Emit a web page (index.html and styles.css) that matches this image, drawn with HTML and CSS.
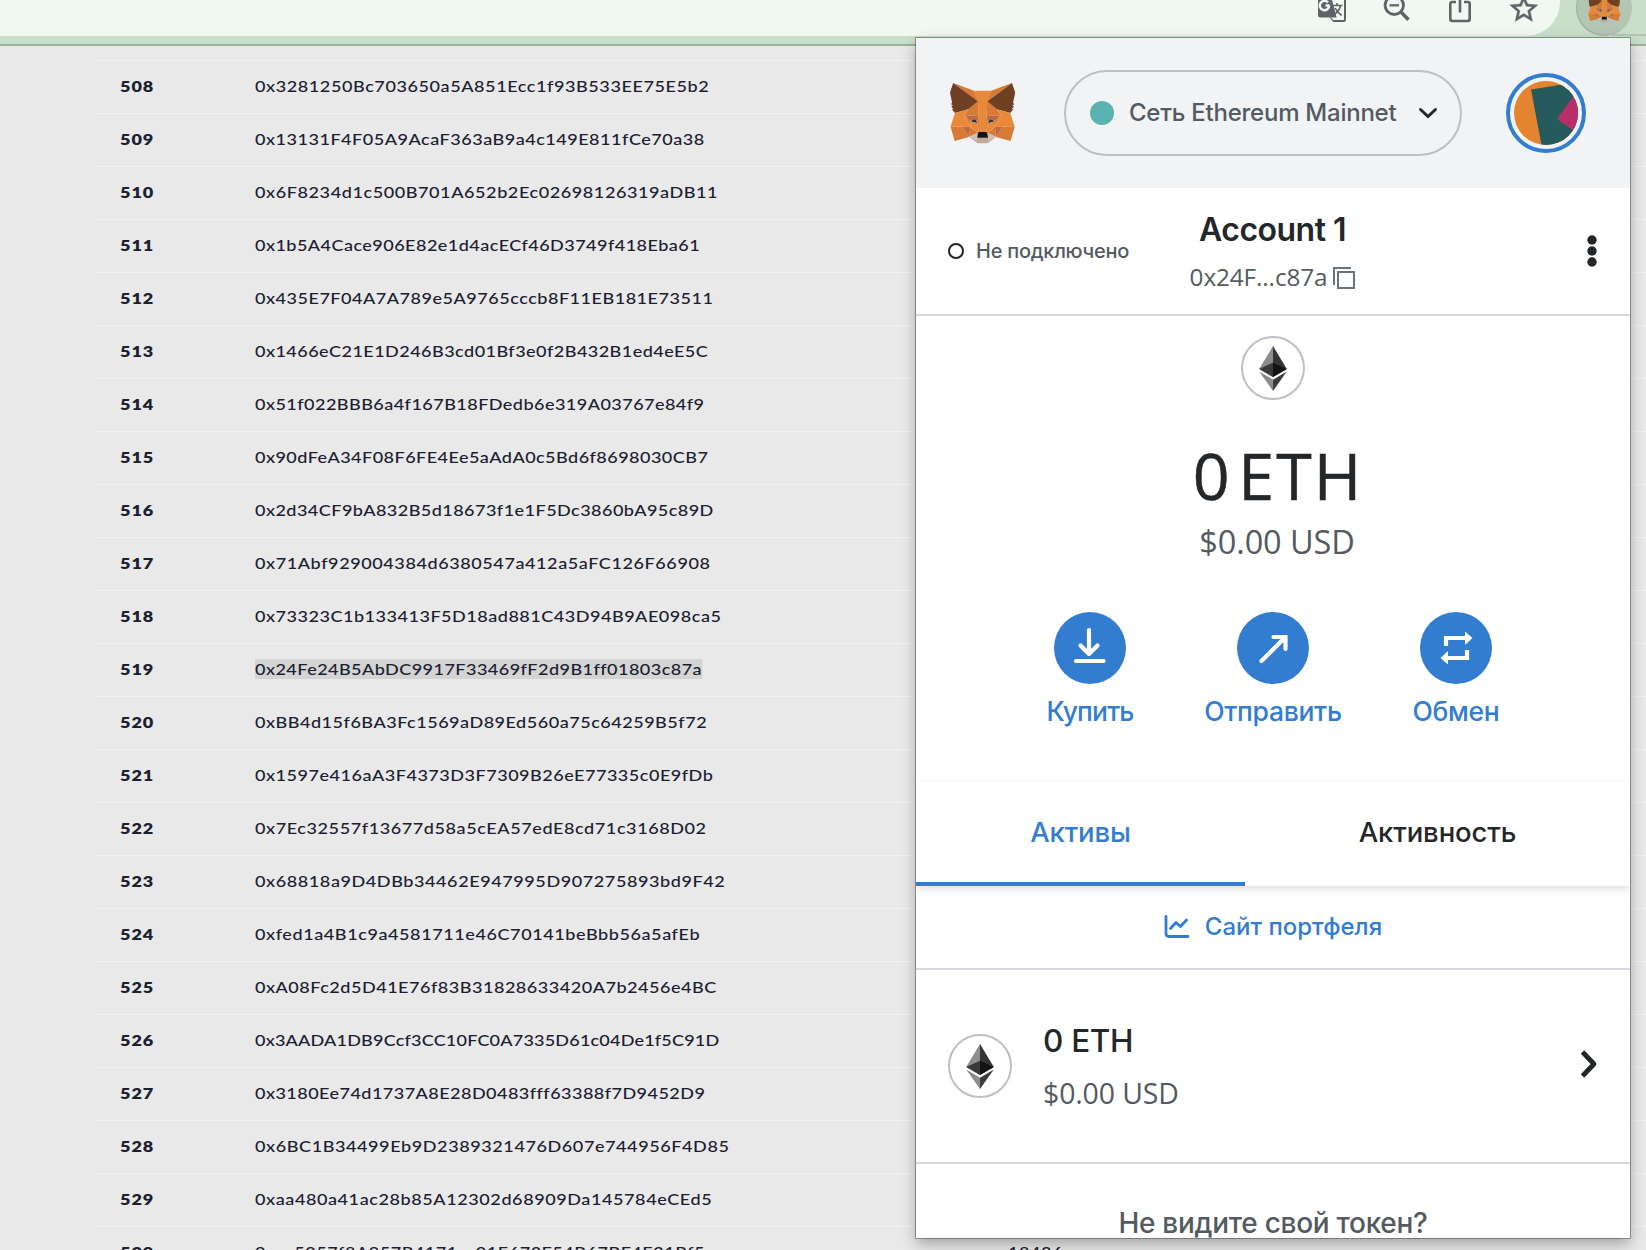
FILE: index.html
```html
<!DOCTYPE html>
<html lang="ru">
<head>
<meta charset="utf-8">
<title>MetaMask</title>
<link rel="stylesheet" href="styles.css">
</head>
<body>
<svg class="defs" aria-hidden="true">
  <symbol id="fox" viewBox="0 0 35 33">
    <path fill="#d67a36" d="m32.9582 1-13.1341 9.7183 2.4424-5.72731z"/>
    <g fill="#d67a36">
      <path d="m2.66296 1 13.01714 9.809-2.3254-5.81802z"/>
      <path d="m28.2295 23.5335-3.4947 5.3386 7.4829 2.0603 2.1436-7.2823z"/>
      <path d="m1.27281 23.6501 2.13055 7.2823 7.46994-2.0603-3.48166-5.3386z"/>
      <path d="m10.4706 14.5149-2.0786 3.1358 7.405.3369-.2469-7.969z"/>
      <path d="m25.1505 14.5149-5.1575-4.58704-.1688 8.05974 7.4049-.3369z"/>
      <path d="m10.8733 28.8721 4.4819-2.1639-3.8583-3.0062z"/>
      <path d="m20.2659 26.7082 4.4689 2.1639-.6105-5.1701z"/>
    </g>
    <g fill="#d3bfb2">
      <path d="m24.7348 28.8721-4.469-2.1639.3638 2.9025-.039 1.231z"/>
      <path d="m10.8732 28.8721 4.1572 1.9696-.026-1.231.3508-2.9025z"/>
    </g>
    <g fill="#233447">
      <path d="m15.1084 21.7842-3.7155-1.0884 2.6243-1.2051z"/>
      <path d="m20.5126 21.7842 1.0913-2.2935 2.6372 1.2051z"/>
    </g>
    <g fill="#c0693a">
      <path d="m10.8733 28.8721.6495-5.3386-4.1312.1167z"/>
      <path d="m24.0982 23.5335.6366 5.3386 3.4946-5.2219z"/>
      <path d="m27.2291 17.6507-7.405.3369.6885 3.7966 1.0913-2.2935 2.6372 1.2051z"/>
      <path d="m11.3929 20.6958 2.6242-1.2051 1.0913 2.2935.6885-3.7966-7.40495-.3369z"/>
    </g>
    <g fill="#d97d36">
      <path d="m8.392 17.6507 3.1049 6.0513-.1039-3.0062z"/>
      <path d="m24.2412 20.6958-.1169 3.0062 3.1049-6.0513z"/>
      <path d="m15.797 17.9876-.6886 3.7967.8704 4.4833.1949-5.9087z"/>
      <path d="m19.8242 17.9876-.3638 2.3584.1819 5.9216.8704-4.4833z"/>
    </g>
    <g fill="#e8893a">
      <path d="m20.5127 21.7842-.8704 4.4834.6236.4406 3.8584-3.0062.1169-3.0062z"/>
      <path d="m11.3929 20.6958.104 3.0062 3.8583 3.0062.6236-.4406-.8704-4.4834z"/>
    </g>
    <path fill="#bfab9d" d="m20.5906 30.8417.039-1.231-.3378-.2851h-4.9626l-.3248.2851.026 1.231-4.1572-1.9696 1.4551 1.1921 2.9489 2.0344h5.0536l2.962-2.0344 1.442-1.1921z"/>
    <path fill="#161616" d="m20.2659 26.7082-.6236-.4406h-3.6635l-.6236.4406-.3508 2.9025.3248-.2851h4.9626l.3378.2851z"/>
    <g fill="#6f4023">
      <path d="m33.5168 11.3532 1.1043-5.36447-1.6629-4.98873-12.6923 9.3944 4.8846 4.1205 6.8983 2.0085 1.52-1.7752-.6626-.4795 1.0523-.9588-.8054-.622 1.0523-.8034z"/>
      <path d="m1 5.98873 1.11724 5.36447-.71451.5313 1.06527.8034-.80545.622 1.05228.9588-.66255.4795 1.51997 1.7752 6.89835-2.0085 4.8846-4.1205-12.69233-9.3944z"/>
    </g>
    <g fill="#e8893a">
      <path d="m32.0489 16.5234-6.8983-2.0085 2.0786 3.1358-3.1049 6.0513 4.1052-.0519h6.1318z"/>
      <path d="m10.4705 14.5149-6.89828 2.0085-2.29944 7.1267h6.11883l4.10519.0519-3.10487-6.0513z"/>
      <path d="m19.8241 17.9876.4417-7.5932 2.0007-5.4034h-8.9119l2.0006 5.4034.4417 7.5932.1689 2.3842.013 5.8958h3.6635l.013-5.8958z"/>
    </g>
  </symbol>
  <symbol id="eth" viewBox="0 0 256 417">
    <path fill="#343434" d="M128 0l-2.8 9.5v275.7L128 288l127.900-75.700z"/>
    <path fill="#8c8c8c" d="M128 0L0 212.300 128 288V154.200z"/>
    <path fill="#3c3c3b" d="M128 312.200l-1.600 1.900v98.200l1.600 4.600 128-180.300z"/>
    <path fill="#8c8c8c" d="M128 416.900V312.200L0 236.600z"/>
    <path fill="#141414" d="M128 288l127.900-75.700L128 154.200z"/>
    <path fill="#393939" d="M0 212.300L128 288V154.200z"/>
  </symbol>
</svg>

<header class="browser">
  <div class="omnibox">
    <svg width="28" height="36" viewBox="0 0 28 36">
      <path d="M13 -7H25.500Q27 -7 27 -5.500V19.500Q27 21 25.500 21H15.500" fill="none" stroke="#5f6368" stroke-width="2"/>
      <path d="M0 -8H12L18.500 17V17.500H13L16.500 21.500L15 22L12 17.500H2.500Q0 17.500 0 15z" fill="#5f6368"/>
      <path d="M11.500 5.500H7.500M11.200 5.500A4.700 4.700 0 1 1 10 2.400" fill="none" stroke="#f0f7f0" stroke-width="2.400"/>
      <path d="M14.500 5.500H24.500M19 3V5.500M22.500 6Q21 11.500 15.500 15M17 8Q19 12 23.500 15.500" fill="none" stroke="#5f6368" stroke-width="1.600"/>
    </svg>
    <svg width="28" height="36" viewBox="0 0 28 36" fill="none" stroke="#5f6368">
      <circle cx="11.300" cy="5.300" r="9.200" stroke-width="2.800"/>
      <path d="M6.500 5.300H16" stroke-width="2.200"/>
      <path d="M17.500 11.500L25.500 19.800" stroke-width="3.600"/>
    </svg>
    <svg width="24" height="36" viewBox="0 0 24 36" fill="none" stroke="#5f6368" stroke-width="2.600">
      <path d="M8 2H4Q2.300 2 2.300 4V19Q2.300 21 4.300 21H19.700Q21.700 21 21.700 19V4Q21.700 2 20 2H16"/>
      <path d="M12 -8V12.500"/>
    </svg>
    <svg width="34" height="36" viewBox="0 0 34 36">
      <path transform="translate(0 -8) scale(1.4)" fill="#5f6368" stroke="#5f6368" stroke-width=".3" d="M22 9.240l-7.190-.62L12 2 9.190 8.630 2 9.240l5.460 4.730L5.820 21 12 17.270 18.180 21l-1.630-7.030L22 9.240zM12 15.400l-3.760 2.270 1-4.280-3.320-2.880 4.380-.38L12 6.100l1.710 4.040 4.380.38-3.320 2.880 1 4.280L12 15.400z"/>
    </svg>
  </div>
  <div class="extension"><svg width="34" height="32"><use href="#fox"/></svg></div>
  <div class="divider"></div>
</header>

<main class="table">
  <div class="row"><b>508</b><span>0x3281250Bc703650a5A851Ecc1f93B533EE75E5b2</span></div>
  <div class="row"><b>509</b><span class="snug">0x13131F4F05A9AcaF363aB9a4c149E811fCe70a38</span></div>
  <div class="row"><b>510</b><span>0x6F8234d1c500B701A652b2Ec02698126319aDB11</span></div>
  <div class="row"><b>511</b><span class="tight">0x1b5A4Cace906E82e1d4acECf46D3749f418Eba61</span></div>
  <div class="row"><b>512</b><span class="snug">0x435E7F04A7A789e5A9765cccb8F11EB181E73511</span></div>
  <div class="row"><b>513</b><span class="tight">0x1466eC21E1D246B3cd01Bf3e0f2B432B1ed4eE5C</span></div>
  <div class="row"><b>514</b><span class="tight">0x51f022BBB6a4f167B18FDedb6e319A03767e84f9</span></div>
  <div class="row"><b>515</b><span class="tight">0x90dFeA34F08F6FE4Ee5aAdA0c5Bd6f8698030CB7</span></div>
  <div class="row"><b>516</b><span class="tight">0x2d34CF9bA832B5d18673f1e1F5Dc3860bA95c89D</span></div>
  <div class="row"><b>517</b><span>0x71Abf929004384d6380547a412a5aFC126F66908</span></div>
  <div class="row"><b>518</b><span class="snug">0x73323C1b133413F5D18ad881C43D94B9AE098ca5</span></div>
  <div class="row"><b>519</b><span class="tight selected">0x24Fe24B5AbDC9917F33469fF2d9B1ff01803c87a</span></div>
  <div class="row"><b>520</b><span class="snug">0xBB4d15f6BA3Fc1569aD89Ed560a75c64259B5f72</span></div>
  <div class="row"><b>521</b><span class="snug">0x1597e416aA3F4373D3F7309B26eE77335c0E9fDb</span></div>
  <div class="row"><b>522</b><span>0x7Ec32557f13677d58a5cEA57edE8cd71c3168D02</span></div>
  <div class="row"><b>523</b><span>0x68818a9D4DBb34462E947995D907275893bd9F42</span></div>
  <div class="row"><b>524</b><span>0xfed1a4B1c9a4581711e46C70141beBbb56a5afEb</span></div>
  <div class="row"><b>525</b><span class="snug">0xA08Fc2d5D41E76f83B31828633420A7b2456e4BC</span></div>
  <div class="row"><b>526</b><span class="tightest">0x3AADA1DB9Ccf3CC10FC0A7335D61c04De1f5C91D</span></div>
  <div class="row"><b>527</b><span class="tight">0x3180Ee74d1737A8E28D0483fff63388f7D9452D9</span></div>
  <div class="row"><b>528</b><span>0x6BC1B34499Eb9D2389321476D607e744956F4D85</span></div>
  <div class="row"><b>529</b><span>0xaa480a41ac28b85A12302d68909Da145784eCEd5</span></div>
  <div class="row"><b>530</b><span class="snug">0xac5057f8A957B4171cc01E673F54B67BF4E21Bf5</span><span>18436</span></div>
</main>

<section class="popup">
  <div class="topbar">
    <svg class="logo" width="68" height="64"><use href="#fox"/></svg>
    <div class="network">
      <i class="dot"></i>
      <span>Сеть Ethereum Mainnet</span>
      <svg width="20" height="12" viewBox="0 0 20 12"><path d="M2.500 2.500L10 9.500L17.500 2.500" fill="none" stroke="#24272a" stroke-width="3" stroke-linecap="round"/></svg>
    </div>
    <div class="avatar">
      <svg width="64" height="64" viewBox="0 0 64 64">
        <clipPath id="round"><circle cx="32" cy="32" r="32"/></clipPath>
        <g clip-path="url(#round)">
          <path fill="#e4842f" d="M0 0h64v64H0z"/>
          <path fill="#265a5c" d="M17 8.500L64 1V64H27.500z"/>
          <path fill="#b92d68" d="M43 38L60 14.500L70 20V57z"/>
        </g>
      </svg>
    </div>
  </div>

  <div class="account">
    <div class="status"><i class="ring"></i><span>Не подключено</span></div>
    <div class="identity">
      <h1>Account 1</h1>
      <p><span>0x24F...c87a</span><svg width="22" height="22" viewBox="0 0 22 22" fill="none" stroke="#6a737d" stroke-width="2"><path d="M18 1H1V18"/><path d="M5 5H21V21H5z"/></svg></p>
    </div>
    <svg class="kebab" width="10" height="32" viewBox="0 0 10 32" fill="#24272a"><circle cx="5" cy="5" r="4.700"/><circle cx="5" cy="16" r="4.700"/><circle cx="5" cy="27" r="4.700"/></svg>
  </div>

  <div class="overview">
    <div class="coin"><svg width="28" height="45"><use href="#eth"/></svg></div>
    <div class="balance">0 ETH</div>
    <div class="fiat">$0.00 USD</div>
    <div class="actions">
      <div class="action">
        <div class="disc"><svg width="72" height="72" viewBox="0 0 72 72" fill="none" stroke="#fff" stroke-width="4.200" stroke-linecap="round" stroke-linejoin="round"><path d="M35 18V41M26.500 33.500L35 42L43.500 33.500M22 49H49.500"/></svg></div>
        <span class="buy">Купить</span>
      </div>
      <div class="action">
        <div class="disc"><svg width="72" height="72" viewBox="0 0 72 72" fill="none" stroke="#fff" stroke-width="4.200" stroke-linecap="round" stroke-linejoin="miter"><path d="M24.500 49L48 25.500M36.500 25H48.500V37"/></svg></div>
        <span>Отправить</span>
      </div>
      <div class="action">
        <div class="disc"><svg width="72" height="72" viewBox="0 0 72 72"><path d="M26 34V26H45M47 38V46H28" fill="none" stroke="#fff" stroke-width="4.200"/><path d="M45 19.500L52.500 26L45 33zM28 39L20.500 46L28 52.500z" fill="#fff"/></svg></div>
        <span>Обмен</span>
      </div>
    </div>
  </div>

  <div class="tabs">
    <div class="tab active">Активы</div>
    <div class="tab">Активность</div>
  </div>

  <div class="portfolio">
    <svg width="26" height="24" viewBox="0 0 26 24" fill="none" stroke="#327dcf" stroke-width="2.800" stroke-linecap="round" stroke-linejoin="round"><path d="M2 1.500V18.500Q2 21.500 5 21.500H24M6.500 13.500L12 7.500L16.500 11.500L22.500 5"/></svg>
    <span>Сайт портфеля</span>
  </div>

  <div class="asset">
    <div class="coin"><svg width="28" height="45"><use href="#eth"/></svg></div>
    <div class="amounts"><strong>0 ETH</strong><span>$0.00 USD</span></div>
    <svg width="18" height="30" viewBox="0 0 18 30"><path d="M2.500 3L14 15L2.500 27" fill="none" stroke="#24272a" stroke-width="4.800" stroke-linejoin="round"/></svg>
  </div>

  <div class="footer">Не видите свой токен?</div>
</section>
</body>
</html>
```
FILE: styles.css
```css
* { box-sizing: border-box; margin: 0; padding: 0; }

body {
  position: relative;
  width: 1646px;
  height: 1250px;
  overflow: hidden;
  background: #e9e9e9;
  font-family: Inter, "Noto Sans", sans-serif;
  color: #24272a;
}

svg { display: block; flex: none; }
.defs { position: absolute; width: 0; height: 0; }

/* Browser toolbar */
.browser {
  display: flex;
  align-items: flex-start;
  height: 46px;
  background: #c9dfc9;
  border-bottom: 2px solid #9db19f;
  overflow: hidden;
}
.omnibox {
  display: flex;
  justify-content: flex-end;
  gap: 37px;
  width: 1560px;
  height: 36px;
  padding-right: 19px;
  background: #f0f8f1;
  border-radius: 0 0 34px 0;
}
.omnibox svg:last-child { margin-left: -2px; }
.extension {
  display: flex;
  justify-content: center;
  width: 56px;
  height: 56px;
  margin: -20px 0 0 16px;
  padding-top: 11px;
  border-radius: 50%;
  background: #b4c6b3;
  box-shadow: inset 1px -1px 1px #9fb3a0;
}
.divider {
  flex: 1;
  height: 2px;
  margin: 34px 0 0 -20px;
  background: #b3c8b4;
}

/* Address table */
.table {
  padding: 14px 0 0 96px;
  font-family: Lato, "Noto Sans", sans-serif;
  font-size: 15.7px;
  line-height: 20px;
  color: #1b2030;
}
.row {
  display: grid;
  grid-template-columns: 134.600px 753.400px 1fr;
  align-items: center;
  justify-items: start;
  height: 53px;
  padding: 0 0 2px 24px;
  border-top: 1px solid #f1f1f5;
}
.row > * {
  transform: scaleX(1.15);
  transform-origin: left;
}
.row b { font-weight: 800; letter-spacing: .8px; }
.row span { font-weight: 500; letter-spacing: .5px; }
.row .snug { letter-spacing: .44px; }
.row .tight { letter-spacing: .39px; }
.row .tightest { letter-spacing: .16px; }
.row .selected { background: #d4d4d4; }

/* Wallet popup */
.popup {
  position: absolute;
  left: 916px;
  top: 38px;
  width: 714px;
  height: 1200px;
  overflow: hidden;
  background: #fff;
  box-shadow: 0 0 0 1px rgba(0, 0, 0, .32), 0 6px 14px rgba(0, 0, 0, .3);
}

.topbar {
  display: flex;
  align-items: center;
  height: 150px;
  padding: 0 44px 0 32px;
  background: #f2f3f5;
}
.network {
  display: flex;
  align-items: center;
  width: 398px;
  height: 86px;
  margin: 0 44px 0 48px;
  padding: 0 22px 0 24px;
  border: 2px solid #bbc0c5;
  border-radius: 43px;
  font-size: 24px;
  font-weight: 450;
  letter-spacing: -.25px;
  color: #535a61;
}
.network span { flex: 1; margin: -2px 0 0 15px; white-space: nowrap; }
.dot { width: 24px; height: 24px; border-radius: 50%; background: #59b3b0; }
.avatar {
  width: 80px;
  height: 80px;
  padding: 4px;
  border: 4px solid #327dcf;
  border-radius: 50%;
}

.account {
  display: grid;
  grid-template-columns: 1fr auto 1fr;
  align-items: center;
  height: 128px;
  padding: 0 33px 0 32px;
  border-bottom: 2px solid #d8d9e0;
}
.status {
  display: flex;
  align-items: center;
  gap: 12px;
  font-size: 20px;
  font-weight: 450;
  letter-spacing: -.25px;
  color: #535a61;
  white-space: nowrap;
}
.ring { width: 16px; height: 16px; border: 2px solid #24272a; border-radius: 50%; }
.identity { padding-top: 3px; text-align: center; }
.identity h1 {
  font-size: 32px;
  font-weight: 600;
  line-height: 47px;
  letter-spacing: -.5px;
}
.identity p {
  display: flex;
  align-items: center;
  gap: 6px;
  height: 47px;
  font: 500 24.300px/47px "Open Sans", "Noto Sans", sans-serif;
  letter-spacing: -.1px;
  color: #535a61;
}
.identity svg { margin-top: 3px; }
.kebab { justify-self: end; }

.coin {
  display: flex;
  align-items: center;
  justify-content: center;
  width: 64px;
  height: 64px;
  border: 2px solid #bbc0c5;
  border-radius: 50%;
}

.overview {
  display: flex;
  flex-direction: column;
  align-items: center;
  height: 466px;
  padding-top: 20px;
}
.balance {
  margin-top: 40px;
  padding-left: 10px;
  font: 500 64.500px/70px "Open Sans", "Noto Sans", sans-serif;
  letter-spacing: 2px;
  word-spacing: -12px;
  -webkit-text-stroke: .5px #24272a;
}
.fiat {
  margin: 1px 0 40px;
  padding-left: 8px;
  font: 500 32.500px/61px "Open Sans", "Noto Sans", sans-serif;
  letter-spacing: -.1px;
  color: #535a61;
}
.actions { display: grid; grid-template-columns: repeat(3, 183px); }
.action {
  display: flex;
  flex-direction: column;
  align-items: center;
  gap: 8px;
  font-size: 26.500px;
  font-weight: 450;
  line-height: 39px;
  letter-spacing: -.3px;
  color: #327dcf;
}
.action .buy { letter-spacing: -.85px; }
.disc { width: 72px; height: 72px; border-radius: 50%; background: #327dcf; }

.tabs {
  position: relative;
  display: grid;
  grid-template-columns: 329px 385px;
  height: 104px;
  background: #fff;
  box-shadow: 0 3px 8px rgba(0, 0, 0, .13);
}
.tab {
  border-bottom: 4px solid transparent;
  font-size: 27.500px;
  font-weight: 450;
  line-height: 100px;
  letter-spacing: -.12px;
  text-align: center;
}
.tab.active { color: #327dcf; border-color: #327dcf; }

.portfolio {
  display: flex;
  align-items: center;
  justify-content: center;
  gap: 15px;
  height: 84px;
  border-bottom: 2px solid #d8d9e0;
  font-size: 24px;
  font-weight: 450;
  color: #327dcf;
}
.portfolio span { margin-top: -1px; }

.asset {
  display: flex;
  align-items: center;
  height: 194px;
  padding: 0 32px;
  border-bottom: 2px solid #d8d9e0;
}
.amounts {
  display: flex;
  flex: 1;
  flex-direction: column;
  margin-left: 31px;
  padding-top: 2px;
  line-height: 53px;
}
.amounts strong { font-size: 31.500px; font-weight: 450; letter-spacing: -.3px; }
.amounts span {
  font-family: "Open Sans", "Noto Sans", sans-serif;
  font-size: 28.400px;
  font-weight: 500;
  letter-spacing: -.1px;
  color: #535a61;
}
.asset > svg { margin-top: -4px; }

.footer {
  padding-top: 34px;
  font-size: 28px;
  font-weight: 450;
  line-height: 50px;
  letter-spacing: -.3px;
  text-align: center;
  color: #535a61;
}
```
